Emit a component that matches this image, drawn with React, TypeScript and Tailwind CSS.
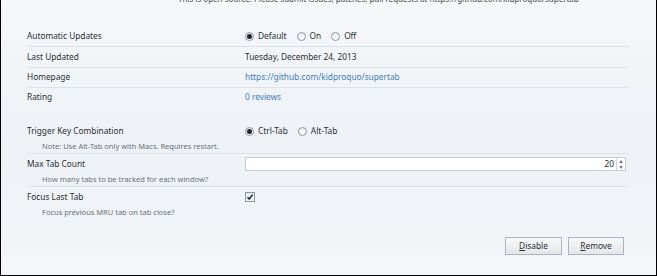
import { useState } from 'react'

function Radio({ checked, label }: { checked?: boolean; label: string }) {
  return (
    <span className="inline-flex items-center gap-[4px]">
      <span className="flex h-[9px] w-[9px] items-center justify-center rounded-full border border-[#8e98a3] bg-gradient-to-b from-[#e9ecef] to-white">
        {checked && <span className="h-[5px] w-[5px] rounded-full bg-[#1f2329]" />}
      </span>
      <span>{label}</span>
    </span>
  )
}

function Row({ label, note, children, last, tall }: { label: string; note?: string; children?: React.ReactNode; last?: boolean; tall?: boolean }) {
  const h = note || tall ? 'h-[20px]' : 'h-[19px]'
  return (
    <div className={`flex ${last ? '' : 'border-b border-[#dde2e7]'}`}>
      <div className="w-[218px] shrink-0">
        <div className={`flex items-center ${h}`}>{label}</div>
        {note && <div className="-mt-[1px] h-[13px] pl-[15px] text-[7.5px] leading-[13px] text-[#6b7178]">{note}</div>}
      </div>
      <div className={`flex flex-1 items-center ${h}`}>{children}</div>
    </div>
  )
}

export default function App() {
  const [count] = useState(20)
  return (
    <div
      className="h-[276px] w-[657px] overflow-hidden border-x border-b border-black bg-[linear-gradient(180deg,#f5f7f9_0%,#eef2f6_55%,#f4f6f9_100%)] text-[8.3px] text-[#2b2f33]"
      style={{ fontFamily: '"Noto Sans", "Open Sans", sans-serif' }}
    >
      <div className="-mt-[7px] h-[12px] pl-[177px] text-[8px] leading-[12px] text-[#4a4f55]">
        This is open source. Please submit issues, patches, pull requests at https://github.com/kidproquo/supertab
      </div>

      <div className="ml-[26px] mt-[22px] w-[602px]">
        <Row label="Automatic Updates">
          <div className="flex items-center gap-[10px]">
            <Radio checked label="Default" />
            <Radio label="On" />
            <Radio label="Off" />
          </div>
        </Row>
        <Row label="Last Updated" tall>Tuesday, December 24, 2013</Row>
        <Row label="Homepage">
          <span className="text-[#3d7fc4]">https://github.com/kidproquo/supertab</span>
        </Row>
        <Row label="Rating" last>
          <span className="text-[#3d7fc4]">0 reviews</span>
        </Row>

        <div className="mt-[14px]">
          <Row label="Trigger Key Combination" note="Note: Use Alt-Tab only with Macs. Requires restart.">
            <div className="flex items-center gap-[10px]">
              <Radio checked label="Ctrl-Tab" />
              <Radio label="Alt-Tab" />
            </div>
          </Row>
          <Row label="Max Tab Count" note="How many tabs to be tracked for each window?">
            <div className="flex h-[14px] w-[381px] items-stretch border border-[#c5ccd4] bg-white">
              <div className="flex flex-1 items-center justify-end pr-[2px]">{count}</div>
              <div className="flex w-[9px] flex-col border-l border-[#d4d9df] text-[5px] leading-[6px] text-[#555]">
                <span className="flex-1 text-center">▲</span>
                <span className="flex-1 text-center">▼</span>
              </div>
            </div>
          </Row>
          <Row label="Focus Last Tab" note="Focus previous MRU tab on tab close?" last>
            <span className="flex h-[10px] w-[10px] items-center justify-center border border-[#8e98a3] bg-gradient-to-b from-[#e6e9ec] to-white">
              <svg viewBox="0 0 8 8" className="h-[8px] w-[8px]">
                <path d="M1.5 4.2 L3.2 6 L6.6 1.6" fill="none" stroke="#1f2329" strokeWidth="1.5" />
              </svg>
            </span>
          </Row>
        </div>
      </div>

      <div className="mr-[32px] mt-[18px] flex justify-end gap-[6px]">
        <button className="h-[18px] w-[57px] border border-[#adb4bc] bg-gradient-to-b from-[#f7f8f9] to-[#e4e7ea] text-[8.3px] text-[#2b2f33]">
          <span className="underline">D</span>isable
        </button>
        <button className="h-[18px] w-[56px] border border-[#adb4bc] bg-gradient-to-b from-[#f7f8f9] to-[#e4e7ea] text-[8.3px] text-[#2b2f33]">
          <span className="underline">R</span>emove
        </button>
      </div>
    </div>
  )
}
